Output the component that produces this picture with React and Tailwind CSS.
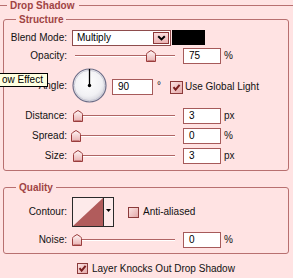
import React from "react";

function Thumb() {
  return (
    <svg width="10" height="12" viewBox="0 0 10 12">
      <defs>
        <linearGradient id="thg" x1="0" y1="0" x2="0" y2="1">
          <stop offset="0" stopColor="#fff6f6" />
          <stop offset="1" stopColor="#e8b0b0" />
        </linearGradient>
      </defs>
      <path d="M0.5 11.5 V4.5 Q0.5 3.5 1.5 2.7 L5 0.5 L8.5 2.7 Q9.5 3.5 9.5 4.5 V11.5 Z" fill="url(#thg)" stroke="#9a3c3c" />
      <line x1="1.5" y1="10.5" x2="8.5" y2="10.5" stroke="#c88080" />
    </svg>
  );
}

function Slider({ pos }) {
  return (
    <div className="relative w-[104px] h-[14px] flex items-center">
      <div className="ml-[4px] flex-1 h-[2px] border-t border-t-[#b06464] border-b border-b-white" />
      <div className={"absolute top-[1px] flex " + pos}>
        <Thumb />
      </div>
    </div>
  );
}

function Field({ v, w = "w-[38px]" }) {
  return (
    <div className={"h-[16px] border border-[#a65a5a] bg-white pl-[5px] leading-[14px] text-black " + w}>{v}</div>
  );
}

function Check({ checked, size = "w-[11px] h-[11px]" }) {
  return (
    <div className={"flex items-center justify-center border border-[#8b3a3a] bg-gradient-to-br from-[#fbe3e3] to-[#e3a9a9] " + size}>
      {checked && (
        <svg width="9" height="9" viewBox="0 0 9 9">
          <polyline points="1.5,4.2 3.6,6.6 7.6,1.8" fill="none" stroke="#7a1f1f" strokeWidth="2" />
        </svg>
      )}
    </div>
  );
}

function Label({ children }) {
  return <div className="w-[63px] text-right whitespace-nowrap text-[#111]">{children}</div>;
}

function Dial() {
  return (
    <svg width="35" height="35" viewBox="0 0 35 35">
      <defs>
        <radialGradient id="dg" cx="0.45" cy="0.4" r="0.6">
          <stop offset="0" stopColor="#ffffff" />
          <stop offset="0.7" stopColor="#f1f1f4" />
          <stop offset="1" stopColor="#d4d4dc" />
        </radialGradient>
      </defs>
      <circle cx="17.5" cy="17.5" r="16.5" fill="url(#dg)" stroke="#6e6e88" strokeWidth="1.2" />
      <circle cx="17.5" cy="17.5" r="15.2" fill="none" stroke="#c4c4d0" strokeWidth="0.8" />
      <line x1="17.5" y1="17.5" x2="17.5" y2="1" stroke="#000" strokeWidth="1.3" />
      <circle cx="17.5" cy="17.5" r="1.7" fill="#000" />
    </svg>
  );
}

export default function App() {
  return (
    <div className="relative w-[293px] h-[278px] overflow-hidden bg-[#ffe3e3] font-['Liberation_Sans',Arial,sans-serif] text-[10px] leading-[12px] text-[#111]">
      {/* title */}
      <div className="flex items-center h-[11px]">
        <div className="w-[7px] h-px bg-[#b87070]" />
        <div className="ml-[3px] mr-[5px] font-bold text-[#9f4444] leading-[11px]">Drop Shadow</div>
        <div className="flex-1 h-px bg-[#b87070]" />
      </div>

      {/* Structure */}
      <fieldset className="ml-[3px] mt-[2px] w-[286px] border border-[#b87070] rounded-[3px] pt-[4px] pb-[6px]">
        <legend className="ml-[12px] px-[3px] font-bold text-[#9f4444] leading-[13px]">Structure</legend>

        <div className="flex items-center h-[16px]">
          <Label>Blend Mode:</Label>
          <div className="ml-[5px] w-[99px] h-[16px] border border-[#8e4c4c] bg-white flex items-center">
            <span className="ml-[4px] flex-1 text-black">Multiply</span>
            <div className="mr-[1px] w-[16px] h-[12px] border border-[#8c3838] bg-gradient-to-b from-[#fbdede] to-[#eab3b3] flex items-center justify-center">
              <svg width="9" height="6" viewBox="0 0 9 6">
                <polyline points="1.2,1.2 4.5,4.4 7.8,1.2" fill="none" stroke="#000" strokeWidth="2" />
              </svg>
            </div>
          </div>
          <div className="ml-[1px] mb-[2px] w-[33px] h-[15px] bg-black" />
        </div>

        <div className="mt-[2px] flex items-center h-[16px]">
          <Label>Opacity:</Label>
          <div className="ml-[4px]"><Slider pos="left-[75px]" /></div>
          <div className="ml-[8px]"><Field v="75" /></div>
          <span className="ml-[3px]">%</span>
        </div>

        <div className="mt-[4px] flex items-center h-[35px]">
          <Label>Angle:</Label>
          <div className="ml-[5px] flex"><Dial /></div>
          <div className="ml-[5px] mt-[3px]"><Field v="90" w="w-[41px]" /></div>
          <span className="ml-[4px] self-start mt-[12px]">°</span>
          <div className="ml-[9px] mt-[3px] flex items-center">
            <Check checked size="w-[13px] h-[13px]" />
            <span className="ml-[2px] whitespace-nowrap">Use Global Light</span>
          </div>
        </div>

        <div className="mt-[5px] flex items-center h-[16px]">
          <Label>Distance:</Label>
          <div className="ml-[4px]"><Slider pos="left-[2px]" /></div>
          <div className="ml-[8px]"><Field v="3" /></div>
          <span className="ml-[3px]">px</span>
        </div>

        <div className="mt-[4px] flex items-center h-[16px]">
          <Label>Spread:</Label>
          <div className="ml-[4px]"><Slider pos="left-[0px]" /></div>
          <div className="ml-[8px]"><Field v="0" /></div>
          <span className="ml-[3px]">%</span>
        </div>

        <div className="mt-[4px] flex items-center h-[16px]">
          <Label>Size:</Label>
          <div className="ml-[4px]"><Slider pos="left-[2px]" /></div>
          <div className="ml-[8px]"><Field v="3" /></div>
          <span className="ml-[3px]">px</span>
        </div>
      </fieldset>

      {/* Quality */}
      <fieldset className="ml-[3px] mt-[10px] w-[286px] border border-[#b87070] rounded-[3px] pt-[3px] pb-[5px]">
        <legend className="ml-[12px] px-[3px] font-bold text-[#9f4444] leading-[13px]">Quality</legend>

        <div className="flex items-center h-[30px]">
          <Label>Contour:</Label>
          <div className="ml-[5px] flex w-[42px] h-[30px] border border-[#2a2a2a]">
            <div className="w-[30px] h-full bg-[#fdeaea] flex">
              <svg width="30" height="28" viewBox="0 0 30 28">
                <polygon points="0,28 30,0 30,28" fill="#b15c5c" />
              </svg>
            </div>
            <div className="w-px bg-[#2a2a2a]" />
            <div className="flex-1 bg-[#fdeaea] flex justify-center items-start pt-[11px]">
              <svg width="5" height="3" viewBox="0 0 5 3">
                <polygon points="0,0 5,0 2.5,3" fill="#000" />
              </svg>
            </div>
          </div>
          <div className="ml-[14px] flex items-center">
            <Check />
            <span className="ml-[4px]">Anti-aliased</span>
          </div>
        </div>

        <div className="mt-[5px] flex items-center h-[16px]">
          <Label>Noise:</Label>
          <div className="ml-[4px]"><Slider pos="left-[1px]" /></div>
          <div className="ml-[8px]"><Field v="0" /></div>
          <span className="ml-[3px]">%</span>
        </div>
      </fieldset>

      <div className="mt-[8px] ml-[77px] flex items-center h-[13px]">
        <Check checked />
        <span className="ml-[4px] whitespace-nowrap">Layer Knocks Out Drop Shadow</span>
      </div>

      {/* tooltip */}
      <div className="absolute left-[-1px] top-[73px] w-[49px] h-[14px] border border-black bg-[#ffffe1] pl-[2px] leading-[12px] text-black whitespace-nowrap">
        ow Effect
      </div>
    </div>
  );
}
